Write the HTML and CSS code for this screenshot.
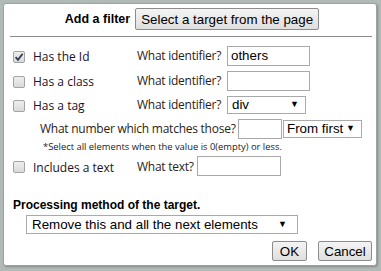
FILE: index.html
```html
<!DOCTYPE html>
<html>
<head>
<meta charset="utf-8">
<link rel="stylesheet" href="styles.css">
</head>
<body>
<div class="dialog">
  <div class="header">
    <span class="title">Add a filter</span>
    <button class="btn pick">Select a target from the page</button>
  </div>
  <div class="rule"></div>

  <div class="row r1">
    <label class="check"><span class="cb"><svg width="10" height="10" viewBox="0 0 10 10"><path d="M1.6 5.2 L4 7.8 L8.6 1.8" fill="none" stroke="#2b3b57" stroke-width="1.8"/></svg></span>Has the Id</label>
    <span class="q">What identifier?</span>
    <input class="field id" type="text" value="others">
  </div>

  <div class="row r2">
    <label class="check"><span class="cb"></span>Has a class</label>
    <span class="q">What identifier?</span>
    <input class="field id" type="text" value="">
  </div>

  <div class="row r3">
    <label class="check"><span class="cb"></span>Has a tag</label>
    <span class="q">What identifier?</span>
    <span class="sel tag"><span class="val">div</span><span class="arrow">▼</span></span>
  </div>

  <div class="row r4">
    <span class="q num-q">What number which matches those?</span>
    <input class="field num" type="text" value="">
    <span class="sel order"><span class="val">From first</span><span class="arrow">▼</span></span>
  </div>

  <div class="note">*Select all elements when the value is 0(empty) or less.</div>

  <div class="row r5">
    <label class="check"><span class="cb"></span>Includes a text</label>
    <span class="q short">What text?</span>
    <input class="field text" type="text" value="">
  </div>

  <div class="section">Processing method of the target.</div>
  <div class="method-row">
    <span class="sel method"><span class="val">Remove this and all the next elements</span><span class="arrow">▼</span></span>
  </div>

  <div class="actions">
    <button class="btn ok">OK</button>
    <button class="btn cancel">Cancel</button>
  </div>
</div>
</body>
</html>
```

FILE: styles.css
```css
* { box-sizing: border-box; }

html, body {
  margin: 0;
  padding: 0;
  width: 381px;
  height: 271px;
  overflow: hidden;
  background: #b1bab6;
}

body {
  padding: 3px 0 0 3px;
  font-family: "Open Sans", "Noto Sans", sans-serif;
  color: #1e1e24;
}

.dialog {
  width: 374px;
  height: 263px;
  background: #ffffff;
  border: 1px solid #9da3a1;
  border-radius: 3px;
  padding: 0 4px 0 6px;
  box-shadow: 1px 1px 2px rgba(0,0,0,0.25);
  white-space: nowrap;
}

.header {
  display: flex;
  justify-content: center;
  align-items: center;
  gap: 5px;
  padding-top: 4px;
  height: 26px;
  padding-left: 2px;
}

.title {
  font-family: "Liberation Sans", Arial, sans-serif;
  font-weight: bold;
  font-size: 12.5px;
  color: #000;
}

.btn {
  font-family: "Liberation Sans", Arial, sans-serif;
  font-size: 13.33px;
  color: #000;
  background: linear-gradient(#f4f4f4, #dedede);
  border: 1px solid #8c8c8c;
  border-radius: 2px;
  height: 21px;
  padding: 0 7px;
  margin: 0;
  white-space: nowrap;
}

.pick { width: 184px; height: 22px; padding: 0; }

.rule {
  height: 1px;
  background: #8a8a8a;
  margin-top: 6px;
}

.row {
  display: flex;
  align-items: center;
  font-size: 12px;
}

.r1 { height: 25px; margin-top: 6px; }
.r2 { height: 25px; }
.r3 { height: 23px; }
.r4 { height: 25px; }
.r5 { height: 26px; }

.check {
  display: flex;
  align-items: center;
  width: 127px;
  flex: none;
  padding-left: 3px;
  margin-top: 2px;
  color: #1d1226;
}

.cb {
  width: 12px;
  height: 12px;
  border: 1px solid #a3a3a3;
  border-radius: 2px;
  background: linear-gradient(#eeeeee, #dadada);
  margin-right: 8px;
  display: flex;
  align-items: center;
  justify-content: center;
  flex: none;
}

.q {
  width: 90px;
  flex: none;
  color: #2a2218;
  letter-spacing: -0.25px;
}

.short { width: 60px; }

.field {
  font-family: "Liberation Sans", Arial, sans-serif;
  font-size: 13.33px;
  height: 20px;
  border: 1px solid #a9a9a9;
  padding: 0 3px;
  margin: 0;
  color: #000;
  background: #fff;
  outline: none;
  flex: none;
}

.id { width: 83px; }
.num { width: 44px; }
.text { width: 84px; }

.num-q {
  width: 228px;
  padding-left: 30px;
}

.sel {
  display: flex;
  align-items: center;
  justify-content: space-between;
  font-family: "Liberation Sans", Arial, sans-serif;
  font-size: 13.33px;
  color: #000;
  border: 1px solid #a9a9a9;
  background: #fff;
  height: 18px;
  padding: 0 6px 0 4px;
  flex: none;
}

.arrow {
  font-size: 9px;
  line-height: 1;
}

.tag { width: 79px; }
.order { width: 79px; margin-left: 1px; height: 18px; padding-left: 3px; }

.note {
  font-size: 9.4px;
  height: 12px;
  line-height: 12px;
  padding-left: 33px;
  color: #222;
}

.section {
  font-family: "Liberation Sans", Arial, sans-serif;
  font-weight: bold;
  font-size: 12px;
  color: #000;
  margin-top: 18px;
  padding-left: 3px;
  height: 16px;
  line-height: 16px;
}

.method-row {
  display: flex;
  padding-left: 16px;
  margin-top: 2px;
}

.method {
  width: 272px;
  height: 19px;
  padding-left: 5px;
  padding-right: 10px;
}

.actions {
  display: flex;
  justify-content: flex-end;
  gap: 11px;
  margin-top: 7px;
}

.ok { width: 35px; height: 20px; padding: 0; }
.cancel { width: 54px; height: 20px; padding: 0; }
```
